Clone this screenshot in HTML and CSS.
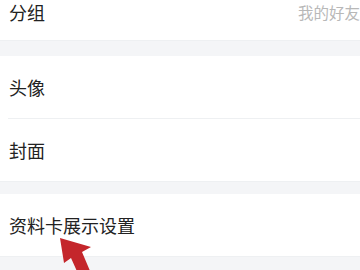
FILE: index.html
```html
<!DOCTYPE html>
<html lang="zh-CN">
<head>
    <meta charset="UTF-8">
    <meta name="viewport" content="width=device-width, initial-scale=1.0">
    <title>资料设置</title>
    <link rel="stylesheet" href="styles.css">
</head>
<body>
    <div class="page">
        <div class="group group-top">
            <div class="row row-top">
                <span class="label">分组</span>
                <span class="value">我的好友</span>
            </div>
        </div>

        <div class="group">
            <div class="row">
                <span class="label">头像</span>
                <span class="chevron"></span>
            </div>
            <div class="divider"></div>
            <div class="row">
                <span class="label">封面</span>
                <span class="chevron"></span>
            </div>
        </div>

        <div class="group">
            <div class="row">
                <span class="label">资料卡展示设置</span>
                <span class="chevron"></span>
            </div>
        </div>
    </div>

    <svg class="pointer" width="60" height="40" viewBox="0 0 60 40">
        <polygon points="0,0 31,9 22,14 33,40 20,40 11,20 4,25" fill="#c4262b"/>
    </svg>
</body>
</html>
```

FILE: styles.css
```css
body {
    margin: 0;
    background-color: #f4f5f7;
    font-family: "Noto Sans CJK SC", "Noto Sans", sans-serif;
    overflow: hidden;
}
.page {
    display: flex;
    flex-direction: column;
    gap: 12px;
    padding-bottom: 16px;
}
.group {
    background-color: #fff;
    border-bottom: 1px solid #eef0f2;
}
.group-top {
    margin-bottom: 3px;
}
.row {
    height: 62px;
    display: flex;
    align-items: center;
    justify-content: space-between;
    padding-left: 9px;
    line-height: 20px;
}
.row-top {
    height: 40px;
    align-items: flex-start;
    padding-top: 2px;
    box-sizing: border-box;
}
.label {
    font-size: 18px;
    color: #222;
}
.value {
    font-size: 15.5px;
    color: #b8b8b8;
}
.chevron {
    width: 8px;
    height: 8px;
    border-top: 1.5px solid #e0e0e0;
    border-right: 1.5px solid #e0e0e0;
    transform: rotate(45deg);
    margin-right: -6px;
}
.divider {
    height: 1px;
    margin-left: 8px;
    background-color: #eef0f2;
}
.pointer {
    position: absolute;
    left: 60px;
    top: 238px;
}
```
